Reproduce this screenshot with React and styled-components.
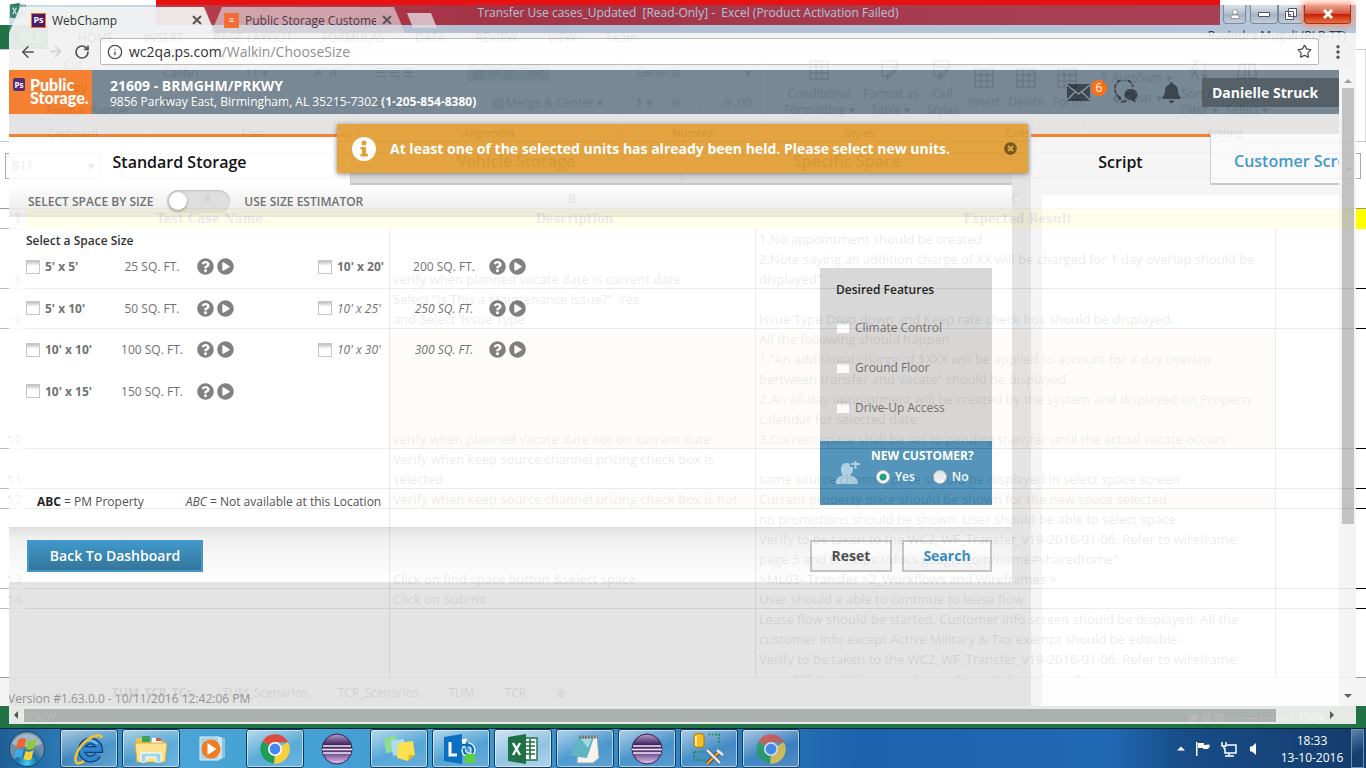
import React from "react";
import styled, { createGlobalStyle, css } from "styled-components";
import { ArrowLeft, ArrowRight, RotateCw, Info, Star, EllipsisVertical } from "lucide-react";
import { FaBell, FaQuestionCircle, FaPlayCircle, FaTimesCircle } from "react-icons/fa";

const Global = createGlobalStyle`
  *, *::before, *::after { box-sizing: border-box; }
  body { margin: 0; background: #fff; overflow: hidden; font-family: "Open Sans", "Noto Sans", sans-serif; }
  button, input { font-family: inherit; }
  button { padding: 0; border: 0; background: none; }
  svg { display: block; }
`;

/* ---------- desktop ---------- */
const Desktop = styled.div`
  display: flex;
  flex-direction: column;
  height: 100vh;
  min-width: 1100px;
  overflow: hidden;
`;
const Stage = styled.div`
  position: relative;
  flex: 1;
  min-height: 0;
  display: flex;
  flex-direction: column;
`;

/* ---------- spreadsheet window ---------- */
const Excel = styled.section`
  flex: 1;
  min-height: 0;
  display: flex;
  flex-direction: column;
  background: #fff;
  color: #000;
  font-family: "Open Sans", sans-serif;
  font-size: 12px;
`;
const ExcelTitle = styled.div`
  display: grid;
  grid-template-columns: 156px 1fr 146px;
  height: 25px;
  flex: none;
`;
const TitleLeft = styled.div`
  padding: 3px 10px;
`;
const TitleText = styled.div`
  background: #e81010;
  color: #fff;
  text-align: center;
  line-height: 25px;
  font-size: 12px;
  font-family: "Open Sans", sans-serif;
  white-space: pre;
`;
const RibbonTabs = styled.div`
  display: flex;
  height: 25px;
  flex: none;
  gap: 30px;
  padding-right: 20px;
  font-size: 12px;
  line-height: 26px;
  white-space: nowrap;
  border-bottom: 1px solid #c8c8c8;
`;
const FileTab = styled.span`
  width: 48px;
  padding-left: 20px;
  background: #217346;
  color: #fff;
`;
const Account = styled.span`
  margin-left: auto;
  line-height: 22px;
`;
const Ribbon = styled.div`
  display: grid;
  grid-template-columns: 147px 212px 261px 148px 184px 133px 1fr;
  height: 92px;
  flex: none;
  border-bottom: 1px solid #c8c8c8;
  color: #333;
`;
const Group = styled.div`
  display: flex;
  flex-direction: column;
  border-right: 1px solid #ddd;
  white-space: nowrap;
`;
const GroupBody = styled.div`
  flex: 1;
  display: flex;
  flex-direction: column;
  justify-content: space-evenly;
  padding: 0 16px;
`;
const GroupLine = styled.div`
  display: flex;
  justify-content: ${(p) => p.$justify || "space-between"};
  align-items: center;
  gap: 8px;
`;
const GroupName = styled.div`
  text-align: center;
  font-size: 11px;
  line-height: 16px;
`;
const BigTool = styled.div`
  display: flex;
  flex-direction: column;
  align-items: center;
  gap: 4px;
  line-height: 16px;
  text-align: center;
`;
const Shade = styled.span`
  background: #9fc9b4;
  padding: 0 6px;
`;
const FormulaBar = styled.div`
  height: 48px;
  flex: none;
  display: flex;
  justify-content: space-between;
  align-items: flex-start;
  padding: 11px 5px 0 5px;
`;
const NameBox = styled.div`
  width: ${(p) => p.$w};
  height: 26px;
  padding: 0 6px;
  border: 1px solid #aaa;
  line-height: 24px;
  display: flex;
  justify-content: space-between;
`;
const ColumnHeads = styled.div`
  display: grid;
  grid-template-columns: 363px 366px 520px;
  height: 19px;
  flex: none;
  padding-left: 26px;
  line-height: 18px;
  text-align: center;
  border-bottom: 1px solid #999;
`;
const SheetClip = styled.div`
  flex: 1;
  min-height: 0;
  overflow: hidden;
  border-bottom: 1px solid #999;
`;
const Sheet = styled.table`
  width: 100%;
  table-layout: fixed;
  border-collapse: separate;
  border-spacing: 0;
  font-size: 13px;
  line-height: 20px;
  td, th { padding: 0 0 0 3px; vertical-align: bottom; white-space: pre; overflow: hidden; height: 20px;
    box-shadow: inset -1px -1px 0 #000; }
  td:last-child { box-shadow: inset 0 -1px 0 #000; }
  td:first-child { box-shadow: inset 0 -1px 0 #bbb; text-align: right; padding-right: 4px; color: #555; }
  thead td, thead th { font-family: "DejaVu Serif", serif; font-weight: bold; font-size: 12px; }
  thead th, thead td:last-child { box-shadow: none; background: #ff0; }
`;
const SheetRow = styled.tr`
  height: ${(p) => p.$lines * 20}px;
  ${(p) => p.$tint && css`td:nth-child(3), td:nth-child(4) { background: #fbe5d6; }`}
`;
const SheetTabs = styled.div`
  display: flex;
  align-items: center;
  gap: 30px;
  height: 28px;
  flex: none;
  padding-left: 112px;
  background: #f4f4f4;
`;
const StatusBar = styled.div`
  height: 22px;
  flex: none;
  background: #217346;
  color: #fff;
  display: flex;
  justify-content: space-between;
  padding: 0 40px 0 22px;
  line-height: 22px;
  font-size: 11px;
`;

const rows = [
  [8, 3, "", "verify when planned vacate date is current date", "1.No appointment should be created\n2.Note saying an addition charge of XX will be charged for 1 day overlap should be\ndisplayed”"],
  [9, 2, "", "Select “Is This a Maintenance issue?”  Yes\nand Select ‘Issue Type", "Issue Type Drop down and Keep rate check box should be displayed."],
  [10, 6, "", "verify when planned vacate date not on current date", "All the following should happen\n1.”An additional charge of $XXX will be applied to account for X day overlap\nbertween transfer and vacate” should be displayed.\n2.An all-day appointment will be created by the system and displayed on Property\ncalendar for selected date\n3.Current space shall be set to pending transfer until the actual vacate occurs", true],
  [11, 2, "", "Verify when keep source channel pricing check box is\nselected", "same source channel price should be displayed in select space screen"],
  [12, 1, "", "Verify when keep source channel pricing check box is not", "Current property price should be shown for the new space selected", true],
  [13, 4, "", "Click on find space button &select space", "no promotions should be shown. User should be able to select space\nVerify to be taken to the WC2_WF_Transfer_v19-2016-01-06. Refer to wireframe\npage 5 and 6 \"https://docs.google.com/home#sharedtome\"\n>ML03- Transfer >2_Workflows and Wireframes >"],
  [14, 1, "", "Click on Submit", "User should e able to continue to lease flow"],
  ["", 4, "", "", "Lease flow should be started. Customer info screen should be displayed. All the\ncustomer info except Active Military & Tax exempt should be editable.\nVerify to be taken to the WC2_WF_Transfer_v19-2016-01-06. Refer to wireframe\npage 9 \"https://docs.google.com/home#sharedtome\""],
];

const ExcelMark = ({ size = 30 }) => (
  <svg width={size} height={size} viewBox="0 0 30 30" aria-hidden="true">
    <path d="M16 4h13v22H16z" fill="#fff" stroke="#1e7145" strokeWidth="1.4" />
    <path d="M18 8h9M18 12h9M18 16h9M18 20h9M22 5v20" stroke="#1e7145" strokeWidth="1.6" />
    <path d="M0 3 18 0v30L0 27z" fill="#1e7145" />
    <path d="m5 9 7 12M12 9 5 21" stroke="#fff" strokeWidth="2.4" />
  </svg>
);

const Sketch = ({ d, size = 24 }) => (
  <svg width={size} height={size} viewBox="0 0 24 24" fill="none" stroke="#333" strokeWidth="1.5" aria-hidden="true">
    <path d={d} />
  </svg>
);
const grid = "M3 3h18v18H3zM3 9h18M3 15h18M9 3v18M15 3v18";
const brush = "M3 3h15v6H3zM3 9v9h8M20 8l-8 10-4 3 1-5z";

function ExcelWindow() {
  return (
    <Excel aria-label="Excel">
      <ExcelTitle>
        <TitleLeft><ExcelMark size={16} /></TitleLeft>
        <TitleText>{"Transfer Use cases_Updated  [Read-Only] -  Excel (Product Activation Failed)"}</TitleText>
        <span />
      </ExcelTitle>
      <RibbonTabs>
        <FileTab>FILE</FileTab><span>HOME</span><span>INSERT</span><span>PAGE LAYOUT</span><span>FORMULAS</span>
        <span>DATA</span><span>REVIEW</span><span>VIEW</span><span>Team</span>
        <Account>Ravindra Mugali (RLR-TT)</Account>
      </RibbonTabs>
      <Ribbon>
        <Group>
          <GroupBody>
            <GroupLine $justify="center">Cut</GroupLine><GroupLine $justify="center">Copy</GroupLine>
            <GroupLine $justify="flex-end">Format Painter</GroupLine>
          </GroupBody>
          <GroupName>Clipboard</GroupName>
        </Group>
        <Group>
          <GroupBody>
            <GroupLine><span>Calibri</span><span>11 ▾</span><span>Aˆ Aˇ</span></GroupLine>
            <GroupLine><b>B</b><i>I</i><u>U</u><span>▾</span><span>A ▾</span></GroupLine>
          </GroupBody>
          <GroupName>Font</GroupName>
        </Group>
        <Group>
          <GroupBody>
            <GroupLine><span>☰ ☰ ☰</span><Shade>▤ Wrap Text</Shade><span /></GroupLine>
            <GroupLine><span>☰ ☰ ☰</span><span>▤ Merge &amp; Center ▾</span></GroupLine>
          </GroupBody>
          <GroupName>Alignment</GroupName>
        </Group>
        <Group>
          <GroupBody>
            <GroupLine><span>General</span><span>▾</span></GroupLine>
            <GroupLine><span>$ ▾</span><span>%</span><span>,</span><span>.0 .00</span></GroupLine>
          </GroupBody>
          <GroupName>Number</GroupName>
        </Group>
        <Group>
          <GroupBody>
            <GroupLine>
              <BigTool><Sketch d={grid} />Conditional<br />Formatting ▾</BigTool>
              <BigTool><Sketch d={brush} />Format as<br />Table ▾</BigTool>
              <BigTool><Sketch d={brush} />Cell<br />Styles</BigTool>
            </GroupLine>
          </GroupBody>
          <GroupName>Styles</GroupName>
        </Group>
        <Group>
          <GroupBody>
            <GroupLine>
              <BigTool><Sketch d={grid} />Insert</BigTool>
              <BigTool><Sketch d={grid} />Delete</BigTool>
              <BigTool><Sketch d={grid} />Form</BigTool>
            </GroupLine>
          </GroupBody>
          <GroupName>Cells</GroupName>
        </Group>
        <Group>
          <GroupBody>
            <GroupLine $justify="flex-start">
              <BigTool><span>∑ AutoSum ▾</span><span>◆ Clear ▾</span></BigTool>
              <BigTool><Sketch d="M4 3h7l-7 8h7M4 21l4-8 3 8M18 4v16l-3-4m3 4 3-4" />Sort &amp;<br />Filter ▾</BigTool>
              <BigTool><Sketch d="M5 6h5v14H3v-7zM19 6h-5v14h7v-7z" />Find &amp;<br />Select ▾</BigTool>
            </GroupLine>
          </GroupBody>
          <GroupName>Editing</GroupName>
        </Group>
      </Ribbon>
      <FormulaBar>
        <NameBox $w="96px"><span>B11</span><span>▾</span></NameBox>
        <NameBox $w="1240px"><span /><span>⌄</span></NameBox>
      </FormulaBar>
      <ColumnHeads><span>A</span><span>B</span><span>C</span></ColumnHeads>
      <SheetClip>
        <Sheet>
          <colgroup>
            <col style={{ width: 26 }} /><col style={{ width: 364 }} /><col style={{ width: 366 }} /><col style={{ width: 520 }} /><col />
          </colgroup>
          <thead>
            <tr><td>1</td><th scope="col">Test Case Name</th><th scope="col">Description</th><th scope="col">Expected Result</th><td /></tr>
          </thead>
          <tbody>
            {rows.map(([n, lines, a, b, c, tint], i) => (
              <SheetRow key={i} $lines={lines} $tint={tint}>
                <td>{n}</td><td>{a}</td><td>{b}</td><td>{c}</td><td />
              </SheetRow>
            ))}
          </tbody>
        </Sheet>
      </SheetClip>
      <SheetTabs>
        <b>TUM_TCR_TCs</b><span>TUM_Scenarios</span><span>TCR_Scenarios</span><span>TUM</span><span>TCR</span><span>⊕</span>
      </SheetTabs>
      <StatusBar><span>READY</span><span>▦ ▤ ▥ − ——|—— + 100%</span></StatusBar>
    </Excel>
  );
}

/* ---------- browser window ---------- */
const Browser = styled.section`
  position: absolute;
  top: 5px;
  left: 9px;
  right: 10px;
  bottom: 4px;
  display: flex;
  flex-direction: column;
`;
const TabStrip = styled.div`
  display: flex;
  height: 28px;
  flex: none;
  background: linear-gradient(90deg, rgba(110, 165, 185, 0.35), rgba(70, 100, 145, 0.42) 35%, rgba(90, 130, 175, 0.45));
`;
const Tab = styled.div`
  display: flex;
  align-items: center;
  gap: 6px;
  width: ${(p) => p.$w}px;
  margin: 2px -6px 0 ${(p) => (p.$active ? 0 : 2)}px;
  padding: 0 13px 0 ${(p) => (p.$active ? 22 : 13)}px;
  font-size: 12px;
  color: ${(p) => (p.$active ? "#333" : "#4a3a42")};
  background: ${(p) => (p.$active ? "rgba(242,242,242,.93)" : "rgba(222,214,220,.68)")};
  clip-path: polygon(11px 0, calc(100% - 11px) 0, 100% 100%, 0 100%);
`;
const TabLabel = styled.span`
  flex: 1;
  overflow: hidden;
  white-space: nowrap;
`;
const CloseX = styled.button`
  width: 10px;
  height: 10px;
  color: #555;
`;
const NewTab = styled.button`
  width: 30px;
  height: 15px;
  margin: 8px 0 0 8px;
  background: rgba(225, 218, 224, 0.8);
  clip-path: polygon(0 0, 24px 0, 100% 100%, 6px 100%);
`;
const WinButtons = styled.div`
  display: flex;
  align-items: flex-start;
  margin: 0 5px 0 auto;
`;
const WinButton = styled.button`
  display: flex;
  align-items: center;
  justify-content: center;
  width: ${(p) => p.$w}px;
  height: 19px;
  margin-right: ${(p) => (p.$gap ? 4 : 0)}px;
  border: 1px solid #7d8a99;
  border-top: 0;
  border-radius: 0 0 4px 4px;
  background: linear-gradient(#dde3ea, #b3bfcc 50%, #a3b1c0 51%, #c4ced9);
  ${(p) => p.$close && css`
    border-color: #8c3a2e;
    background: linear-gradient(#e9a392, #d8553c 48%, #c01d05 50%, #f0703a);
    box-shadow: 0 0 6px 2px #ff8a6a;
  `}
`;
const Toolbar = styled.div`
  display: flex;
  align-items: center;
  height: 37px;
  flex: none;
  gap: 10px;
  padding: 0 9px 0 10px;
  background: #f2f2f2;
  opacity: 0.93;
  color: #444;
`;
const IconButton = styled.button`
  flex: none;
  color: ${(p) => (p.$off ? "#ccc" : "#444")};
`;
const Omnibox = styled.div`
  display: flex;
  align-items: center;
  flex: 1;
  height: 27px;
  padding: 0 6px;
  gap: 6px;
  background: #fff;
  border: 1px solid #b5b5b5;
  border-radius: 2px;
  font-size: 14px;
`;
const Url = styled.span`
  flex: 1;
  color: #888;
  b { font-weight: 400; color: #222; }
`;
const View = styled.div`
  display: flex;
  flex: 1;
  min-height: 0;
  opacity: 0.92;
`;
const Page = styled.div`
  position: relative;
  flex: 1;
  min-width: 0;
  display: flex;
  flex-direction: column;
  overflow: hidden;
  background: #e2e2e2;
`;
const VScroll = styled.div`
  display: flex;
  flex-direction: column;
  align-items: center;
  width: 17px;
  flex: none;
  padding: 7px 0 6px;
  background: #f4f4f4;
`;
const VThumb = styled.div`
  width: 12px;
  height: 70%;
  margin: 3px 0 auto;
  background: #bdbdbd;
`;
const HScroll = styled.div`
  display: flex;
  align-items: center;
  height: 18px;
  flex: none;
  padding: 0 20px 0 3px;
  background: #f4f4f4;
  opacity: 0.93;
`;
const HThumb = styled.div`
  height: 13px;
  flex: 1;
  margin: 0 52px 0 4px;
  background: #b6b6b6;
`;
const Arrow = ({ d, c = "#555" }) => (
  <svg width="8" height="8" viewBox="0 0 8 8" aria-hidden="true"><path d={d} fill={c} /></svg>
);

/* ---------- web page ---------- */
const Header = styled.header`
  display: flex;
  align-items: stretch;
  height: 44px;
  flex: none;
  background: #6d7e8c;
  color: #fff;
`;
const Logo = styled.a`
  display: flex;
  gap: 5px;
  width: 83px;
  padding: 8px 0 0 4px;
  margin-right: 18px;
  background: #f47721;
  color: #fff;
  text-decoration: none;
  font: 900 16px/13px Lato, sans-serif;
`;
const Badge = styled.span`
  display: grid;
  place-content: center;
  width: 12px;
  height: 13px;
  flex: none;
  border-radius: 2px;
  background: #4b1b6d;
  color: #fff;
  font: 700 8px/10px "Open Sans", sans-serif;
`;
const Favicon = styled.span`
  display: grid;
  place-content: center;
  width: 15px;
  height: 15px;
  flex: none;
  border: 1px solid #f47721;
  background: ${(p) => (p.$plain ? "#f26a35" : "#4b1b6d")};
  color: #fff;
  font: 700 9px/12px "Open Sans", sans-serif;
`;
const Location = styled.div`
  flex: 1;
  padding-top: 8px;
  font-size: 12px;
  line-height: 15px;
  strong { display: block; font-size: 14px; line-height: 16px; }
`;
const HeaderTools = styled.div`
  display: flex;
  align-items: center;
  color: #36424c;
`;
const Tool = styled.button`
  display: flex;
  color: #2c3740;
  margin-right: ${(p) => p.$gap}px;
`;
const Count = styled.span`
  width: 16px;
  height: 16px;
  margin: 0 7px 8px 1px;
  border-radius: 50%;
  background: #f60;
  color: #fff;
  font-size: 12px;
  line-height: 16px;
  text-align: center;
`;
const UserButton = styled.button`
  width: 137px;
  height: 29px;
  padding-left: 10px;
  background: #47535c;
  color: #fff;
  font-size: 14px;
  font-weight: 700;
  text-align: left;
`;
const Body = styled.div`
  display: flex;
  flex: 1;
  min-height: 0;
  padding-top: 20px;
`;
const Main = styled.main`
  display: flex;
  flex-direction: column;
  flex: 1;
  min-width: 0;
  margin-right: 19px;
`;
const Tabs = styled.div`
  display: flex;
  height: 51px;
  flex: none;
`;
const PageTab = styled.button`
  width: ${(p) => p.$w};
  flex: none;
  padding-top: 2px;
  font-size: 16px;
  font-weight: 600;
  white-space: nowrap;
  color: ${(p) => p.$color || "#000"};
  background: ${(p) => p.$bg || "#fff"};
  border-top: 3px solid #f47721;
  ${(p) => !p.$active && css`
    border-top: 0;
    border-left: 1px solid #ccc;
    border-bottom: 2px solid #c4c4c4;
    padding-top: 5px;
  `}
`;
const ModeBar = styled.div`
  display: flex;
  align-items: center;
  gap: 14px;
  height: 32px;
  flex: none;
  padding-left: 19px;
  background: linear-gradient(#fff, #e6e6e6);
  color: #666;
  font-size: 12px;
  font-weight: 600;
`;
const Toggle = styled.input`
  appearance: none;
  width: 63px;
  height: 23px;
  margin: 0;
  border-radius: 12px;
  background: #dcdcdc;
  box-shadow: inset 0 1px 2px #bbb;
  &::before {
    content: "";
    display: block;
    width: 18px;
    height: 18px;
    margin: 2px;
    border-radius: 50%;
    background: #fff;
    box-shadow: 0 1px 3px #888;
  }
`;
const Panel = styled.div`
  display: flex;
  justify-content: space-between;
  height: 311px;
  flex: none;
  padding: 15px 20px 0 17px;
  background: #fff;
  border-bottom: 1px solid #d8d8d8;
`;
const Sizes = styled.fieldset`
  margin: 0;
  padding: 0;
  border: 0;
  display: flex;
  flex-direction: column;
  legend { padding: 0; font-size: 12px; line-height: 18px; font-weight: 600; color: #222; }
`;
const SizeGrid = styled.div`
  display: grid;
  grid-auto-flow: column;
  grid-template-rows: repeat(4, 1fr);
  grid-auto-columns: 292px;
  height: 166px;
  margin-top: -4px;
`;
const SizeItem = styled.div`
  display: grid;
  grid-template-columns: 84px 84px 1fr;
  align-items: center;
  color: #666;
  font-size: 12px;
  font-style: ${(p) => (p.$off ? "italic" : "normal")};
`;
const CheckLabel = styled.label`
  display: flex;
  align-items: center;
  gap: 5px;
  font-weight: ${(p) => (p.$strong ? 700 : 400)};
  white-space: nowrap;
`;
const Check = styled.input`
  appearance: none;
  width: 14px;
  height: 14px;
  margin: 0;
  flex: none;
  border: 1px solid ${(p) => (p.$pale ? "#d6d6d6" : "#c2c2c2")};
  background: linear-gradient(#bbb, #fff 40%);
`;
const Area = styled.span`
  text-align: center;
  white-space: nowrap;
`;
const Helps = styled.span`
  display: flex;
  gap: 3px;
  padding-left: 3px;
  button { color: #777; }
`;
const Legend = styled.div`
  display: flex;
  gap: 42px;
  margin: auto 0 17px 11px;
  font-size: 12px;
  line-height: 16px;
  color: #444;
  b { color: #111; }
`;
const Side = styled.aside`
  width: 172px;
  margin: 36px 0 22px;
  display: flex;
  flex-direction: column;
`;
const Features = styled.fieldset`
  flex: 1;
  margin: 0;
  padding: 14px 16px 0;
  border: 0;
  background: #d5d5d5;
  color: #666;
  font-size: 12px;
  h2 { margin: 0 0 9px; font-size: 12px; line-height: 16px; font-weight: 600; color: #111; }
  label { height: 40px; }
`;
const Customer = styled.div`
  display: grid;
  grid-template-columns: 24px 1fr;
  gap: 11px;
  height: 64px;
  padding: 7px 14px 0 16px;
  background: #478db6;
  color: #fff;
  font-size: 12px;
  svg { margin-top: 13px; }
`;
const Question = styled.fieldset`
  border: 0;
  margin: 0;
  padding: 0;
  legend { padding: 0; line-height: 16px; font-weight: 700; white-space: nowrap; }
`;
const Choices = styled.div`
  display: flex;
  gap: 18px;
  padding: 4px 0 0 5px;
  label { display: flex; align-items: center; gap: 5px; font-weight: 600; line-height: 18px; }
`;
const Radio = styled.input`
  appearance: none;
  width: 14px;
  height: 14px;
  margin: 0;
  border-radius: 50%;
  border: 1px solid #bbb;
  background: linear-gradient(#ddd, #fff);
  &:checked { background: radial-gradient(#1c9c80 0 3px, #fff 4px); }
`;
const Actions = styled.div`
  display: flex;
  align-items: center;
  gap: 10px;
  height: 54px;
  flex: none;
  padding: 1px 20px 0 18px;
  background: linear-gradient(#e0e0e0, #f0f0f0 20%, #fff);
`;
const Action = styled.button`
  width: ${(p) => p.$w}px;
  height: 32px;
  border: 2px solid ${(p) => (p.$primary ? "#3391c5" : "#c0c0c0")};
  background: ${(p) => (p.$primary ? "linear-gradient(#2f8fc4, #246b94)" : "linear-gradient(#fff, #f2f2f2)")};
  color: ${(p) => p.$color};
  font-size: 14px;
  font-weight: ${(p) => (p.$primary ? 600 : 700)};
  white-space: nowrap;
  margin-right: ${(p) => (p.$primary ? "auto" : 0)};
`;
const Version = styled.p`
  margin: auto 0 0 -1px;
  color: #8c8c8c;
  font-size: 12px;
  line-height: 15px;
`;
const Script = styled.aside`
  display: flex;
  flex-direction: column;
  width: 308px;
  flex: none;
  overflow: hidden;
  background: #f5f5f5;
`;
const ScriptBody = styled.div`
  flex: 1;
  margin: 10px 0 0 11px;
  background: #fff;
`;
const Banner = styled.div`
  position: absolute;
  top: 54px;
  left: 328px;
  right: 311px;
  display: flex;
  align-items: center;
  gap: 14px;
  height: 49px;
  padding: 0 11px 0 15px;
  background: rgba(224, 151, 34, 0.93);
  color: #fff;
  font-size: 14px;
  font-weight: 700;
  box-shadow: 0 1px 5px #777;
  span { flex: 1; white-space: nowrap; }
  button { color: #6d4b12; }
`;

const leftSizes = [["5' x 5'", 25], ["5' x 10'", 50], ["10' x 10'", 100], ["10' x 15'", 150]];
const rightSizes = [["10' x 20'", 200], ["10' x 25'", 250, true], ["10' x 30'", 300, true]];

const WhiteX = ({ c = "#555", w = 2 }) => (
  <svg width="10" height="10" viewBox="0 0 10 10" stroke={c} strokeWidth={w} aria-hidden="true"><path d="m1 1 8 8M9 1 1 9" /></svg>
);

function WebPage() {
  return (
    <Page>
      <Header>
        <Logo href="#"><Badge>Ps</Badge><span>Public<br />Storage.</span></Logo>
        <Location>
          <strong>21609 - BRMGHM/PRKWY</strong>
          9856 Parkway East, Birmingham, AL 35215-7302 <b>(1-205-854-8380)</b>
        </Location>
        <HeaderTools>
          <Tool $gap={0} aria-label="Messages">
            <svg width="23" height="17" viewBox="0 0 23 17"><path d="M0 0h23v17H0z" fill="#2c3740" /><path d="m0 1 11.500 9L23 1M0 16l8-8M23 16l-8-8" fill="none" stroke="#8b98a2" strokeWidth="1.200" /></svg>
          </Tool>
          <Count>6</Count>
          <Tool $gap={23} aria-label="Chat">
            <svg width="24" height="24" viewBox="0 0 24 24" fill="none">
              <path d="M7 18C3 16 1 13 1 10a9 9 0 0 1 18-3" stroke="#2c3740" strokeWidth="1.600" strokeDasharray="5 1" />
              <path d="M6 17v3M7 22l5-1" stroke="#2c3740" strokeWidth="1.800" />
              <path d="M17 9c4 0 6.500 2.500 6.500 5.500 0 2-1 3.500-2.500 4.500l.5 4-4-3c-4 0-7-2-7-5.500S13 9 17 9z" fill="#2c3740" />
            </svg>
          </Tool>
          <Tool $gap={20} aria-label="Alerts"><FaBell size={21} /></Tool>
          <UserButton>Danielle Struck</UserButton>
        </HeaderTools>
      </Header>
      <Body>
        <Main>
          <Tabs>
            <PageTab $w="34%" $active>Standard Storage</PageTab>
            <PageTab $w="33%" $bg="#d8d8d8" $color="#444">Vehicle Storage</PageTab>
            <PageTab $w="33%" $bg="#d8d8d8" $color="#444">Specific Space</PageTab>
          </Tabs>
          <ModeBar>
            <span>SELECT SPACE BY SIZE</span>
            <Toggle type="checkbox" role="switch" aria-label="Use size estimator" />
            <span>USE SIZE ESTIMATOR</span>
          </ModeBar>
          <Panel>
            <Sizes>
              <legend>Select a Space Size</legend>
              <SizeGrid>
                {[...leftSizes, ...rightSizes].map(([name, ft, off]) => (
                  <SizeItem key={name} $off={off}>
                    <CheckLabel $strong={!off}><Check type="checkbox" />{name}</CheckLabel>
                    <Area>{ft} SQ. FT.</Area>
                    <Helps>
                      <button aria-label="Help"><FaQuestionCircle size={17} /></button>
                      <button aria-label="Play"><FaPlayCircle size={17} /></button>
                    </Helps>
                  </SizeItem>
                ))}
              </SizeGrid>
              <Legend>
                <span><b>ABC</b> = PM Property</span>
                <span><i>ABC</i> = Not available at this Location</span>
              </Legend>
            </Sizes>
            <Side>
              <Features>
                <h2>Desired Features</h2>
                {["Climate Control", "Ground Floor", "Drive-Up Access"].map((t) => (
                  <CheckLabel key={t}><Check type="checkbox" $pale />{t}</CheckLabel>
                ))}
              </Features>
              <Customer>
                <svg width="24" height="24" viewBox="0 0 24 24" fill="#a9cce0" aria-hidden="true">
                  <path d="M5 8c0-4 2.500-6 6-6 1.500 0 2.500.5 3 1v3h3c.5 4-1 7-3 8.500 5 1 8 3 8 8.500H0c0-5.500 2-7.500 7-8.500C5.500 13 5 11 5 8z" /><path d="M18.500-2h2v4H24v2h-3.500v4h-2V4H15V2h3.500z" />
                </svg>
                <Question>
                  <legend>NEW CUSTOMER?</legend>
                  <Choices>
                    <label><Radio type="radio" name="new" defaultChecked />Yes</label>
                    <label><Radio type="radio" name="new" />No</label>
                  </Choices>
                </Question>
              </Customer>
            </Side>
          </Panel>
          <Actions>
            <Action $w={176} $primary $color="#fff">Back To Dashboard</Action>
            <Action $w={82} $color="#444">Reset</Action>
            <Action $w={90} $color="#2a87bd">Search</Action>
          </Actions>
          <Version>Version #1.63.0.0 - 10/11/2016 12:42:06 PM</Version>
        </Main>
        <Script>
          <Tabs>
            <PageTab $w="179px" $active $bg="#f5f5f5">Script</PageTab>
            <PageTab $w="179px" $bg="#fafafa" $color="#3390c4">Customer Screen</PageTab>
          </Tabs>
          <ScriptBody />
        </Script>
      </Body>
      <Banner role="alert">
        <svg width="24" height="24" viewBox="0 0 24 24" aria-hidden="true">
          <circle cx="12" cy="12" r="12" fill="#fff" />
          <circle cx="12" cy="6" r="2.500" fill="#e29a22" /><path d="M8.500 10h5.500v7h2v2.500H8.500V17H10v-4.500H8.500z" fill="#e29a22" />
        </svg>
        <span>At least one of the selected units has already been held. Please select new units.</span>
        <button aria-label="Dismiss"><FaTimesCircle size={13} /></button>
      </Banner>
    </Page>
  );
}

function BrowserWindow() {
  return (
    <Browser aria-label="Browser">
      <TabStrip>
        <Tab $w={206} $active><Favicon>Ps</Favicon><TabLabel>WebChamp</TabLabel><CloseX aria-label="Close tab"><WhiteX /></CloseX></Tab>
        <Tab $w={194}><Favicon $plain>≡</Favicon><TabLabel>Public Storage Customer</TabLabel><CloseX aria-label="Close tab"><WhiteX /></CloseX></Tab>
        <NewTab aria-label="New tab" />
        <WinButtons>
          <WinButton $w={23} $gap aria-label="Profile">
            <svg width="10" height="10" viewBox="0 0 10 10" fill="#fff" stroke="#667" strokeWidth=".6"><circle cx="5" cy="3" r="2.400" /><path d="M1 9.500V7l2-1h4l2 1v2.500z" /></svg>
          </WinButton>
          <WinButton $w={28} aria-label="Minimize"><svg width="12" height="5"><path d="M.5.5h11v4H.5z" fill="#fff" stroke="#556" /></svg></WinButton>
          <WinButton $w={26} aria-label="Restore">
            <svg width="12" height="12" fill="#fff" stroke="#556"><path d="M3.500.5h8v8h-8zM.5 3.500h8v8h-8zM3.500 6.500h2v2h-2z" /></svg>
          </WinButton>
          <WinButton $w={47} $close aria-label="Close"><WhiteX c="#fff" w={3} /></WinButton>
        </WinButtons>
      </TabStrip>
      <Toolbar>
        <IconButton aria-label="Back"><ArrowLeft size={18} /></IconButton>
        <IconButton $off aria-label="Forward"><ArrowRight size={17} /></IconButton>
        <IconButton aria-label="Reload"><RotateCw size={16} strokeWidth={2.5} /></IconButton>
        <Omnibox><Info size={16} /><Url><b>wc2qa.ps.com</b>/Walkin/ChooseSize</Url><Star size={15} /></Omnibox>
        <IconButton aria-label="Menu"><EllipsisVertical size={18} strokeWidth={2.5} /></IconButton>
      </Toolbar>
      <View>
        <WebPage />
        <VScroll><Arrow d="M0 6h8L4 2z" c="#999" /><VThumb /><Arrow d="M0 2h8L4 6z" /></VScroll>
      </View>
      <HScroll><Arrow d="M6 0v8L2 4z" /><HThumb /><Arrow d="M2 0v8l4-4z" /></HScroll>
    </Browser>
  );
}

/* ---------- taskbar ---------- */
const Taskbar = styled.nav`
  display: flex;
  align-items: stretch;
  height: 40px;
  flex: none;
  border-top: 1px solid #0c2438;
  background: linear-gradient(90deg, #1f5f98 0, #2a78b4 60px, #4aa5d6 180px, #419bd2 450px, #2f7fc0 720px, #1c62ac 860px, #2069b3 1110px, #184d88 1180px, #143c6c);
`;
const Start = styled.button`
  width: 60px;
  display: grid;
  place-items: center;
  padding-right: 6px;
`;
const Items = styled.div`
  display: flex;
  gap: 4px;
`;
const Item = styled.button`
  display: grid;
  place-items: center;
  width: 58px;
  border-radius: 3px;
  ${(p) => p.$on && css`
    border: 1px solid #123c5c;
    box-shadow: inset 0 0 0 1px rgba(255, 255, 255, 0.55);
    background: linear-gradient(160deg, rgba(255, 255, 255, ${p.$hot ? 0.75 : 0.6}), rgba(255, 255, 255, ${p.$hot ? 0.45 : 0.1}) 55%, rgba(255, 255, 255, ${p.$hot ? 0.6 : 0.2}));
  `}
`;
const Tray = styled.div`
  display: flex;
  align-items: center;
  gap: 10px;
  margin-left: auto;
  padding-right: 2px;
  color: #fff;
`;
const Clock = styled.time`
  width: 76px;
  padding-left: 6px;
  font-size: 12px;
  line-height: 17px;
  text-align: center;
`;
const ShowDesktop = styled.button`
  width: 13px;
  margin-left: -6px;
  align-self: stretch;
  border: 1px solid #6f93b5;
  background: linear-gradient(160deg, #5b82a8, #173f6c 60%);
`;

const ChromeMark = ({ dim }) => (
  <svg width="30" height="30" viewBox="0 0 30 30" opacity={dim ? 0.75 : 1}>
    <path d="M15 15 2.400 7.500A14.600 14.600 0 0 1 28 8.200H15z" fill="#dd4b3e" />
    <path d="M15 15 28 8.200A14.600 14.600 0 0 1 14 29.600z" fill="#f8cf3c" />
    <path d="M15 15 14 29.600A14.600 14.600 0 0 1 2.400 7.500z" fill="#1f9e58" />
    <circle cx="15" cy="15" r="7" fill="#fff" /><circle cx="15" cy="15" r="5.400" fill="#4688f1" />
  </svg>
);
const EclipseMark = () => (
  <svg width="32" height="32" viewBox="0 0 32 32">
    <defs><linearGradient id="ecl" x2="0" y2="1"><stop stopColor="#b9a0cc" /><stop offset=".35" stopColor="#44265f" /><stop offset=".6" stopColor="#5d3b80" /><stop offset="1" stopColor="#e6c8f0" /></linearGradient></defs>
    <circle cx="16" cy="16" r="15" fill="url(#ecl)" stroke="#35204c" />
    <path d="M2 13h28M1 16.500h30M2 20h28" stroke="#f1e8f7" strokeWidth="1.600" />
  </svg>
);
const IeMark = () => (
  <svg width="32" height="32" viewBox="0 0 32 32" fill="none">
    <path d="M25 22a9 9 0 1 1 1.500-5.500H11" stroke="#0f3f78" strokeWidth="7" />
    <path d="M25 22a9 9 0 1 1 1.500-5.500H11" stroke="#2f86cc" strokeWidth="4.500" />
    <path d="M24 11a9 9 0 0 0-13-1" stroke="#8fd0f5" strokeWidth="1.500" />
    <path d="M29 5C27-1 16 4 9 12S1 28 4 30c2 1 4 0 7-2" stroke="#f5c02c" strokeWidth="2.600" />
  </svg>
);
const FolderMark = () => (
  <svg width="34" height="30" viewBox="0 0 34 30">
    <path d="M2 4h10l2 3h16v21H3z" fill="#e8c35a" /><path d="M8 2h8v6H8z" fill="#3aa55a" /><path d="M18 4h9v6h-9z" fill="#fff" /><path d="M22 4h5v3h-5z" fill="#d8563c" />
    <path d="M1 9h32l-2 19H3z" fill="#fbe391" stroke="#d9ab3f" /><path d="M7 28v-9h20v9h-5v-5H12v5z" fill="#9dd6ef" stroke="#fff" />
  </svg>
);
const PlayerMark = () => (
  <svg width="28" height="26" viewBox="0 0 28 26">
    <path d="M8 2h18v20H8z" fill="#8ac3de" /><path d="M5 1h18v22H5z" fill="#c7e2ee" /><path d="M1 1h19v23H1z" fill="#a9d0e4" stroke="#e3f1f8" />
    <circle cx="12" cy="13" r="9.500" fill="#f07d1e" /><path d="m8.500 7 9 6-9 6z" fill="#fff" />
  </svg>
);
const NotesMark = () => (
  <svg width="34" height="28" viewBox="0 0 34 28">
    <path d="m2 3 12-2 3 15-13 2z" fill="#8fdc93" /><path d="m9 6 13-2 2 15-13 2z" fill="#aedcf2" /><path d="m16 8 15-2 2 14-7 6-11-3z" fill="#fbe04f" /><path d="m26 26 1-6h6z" fill="#d8b41f" />
  </svg>
);
const LyncMark = () => (
  <svg width="34" height="32" viewBox="0 0 34 32">
    <path d="M0 4 18 1v30L0 28z" fill="#0b6fc4" /><path d="M6 9v13h7" fill="none" stroke="#fff" strokeWidth="3" />
    <path d="M18 9l5-1M18 12h6a5 5 0 0 1 4 8M29 22h-5a5 5 0 0 1-4-6" fill="none" stroke="#fff" strokeWidth="5" />
    <path d="M18 12h6a5 5 0 0 1 4 8M29 22h-5a5 5 0 0 1-4-6" fill="none" stroke="#0b6fc4" strokeWidth="2.500" /><path d="m22 8 4 4-4 4z" fill="#0b6fc4" /><path d="M21 21h10v9H21z" fill="#5bd13b" />
  </svg>
);
const NotepadMark = () => (
  <svg width="32" height="30" viewBox="0 0 32 30">
    <path d="m10 3 18-1 2 22-6 5H8z" fill="#f4f4ec" stroke="#9aa" /><path d="M10 3h15l-7 21-17-2z" fill="#5fb5c4" /><path d="m12 5 11-1-4 10z" fill="#a4dbe3" />
    <path d="M10 3h19" stroke="#777" strokeWidth="3" strokeDasharray="2 1" />
  </svg>
);
const DbMark = () => (
  <svg width="32" height="32" viewBox="0 0 32 32" fill="none">
    <path d="M15 1.500h11v10M1 19v8h11M1 19h10" stroke="#1c8a3c" strokeWidth="1.500" strokeDasharray="2 1.500" />
    <path d="M1 2c2-2 8-2 10 0v11c-2 2-8 2-10 0z" fill="#f4bd22" stroke="#a3770b" /><path d="M3 3v10" stroke="#ffeaa0" strokeWidth="2" />
    <path d="M27 18 14 31" stroke="#333" strokeWidth="4" /><path d="M27 18 14 31" stroke="#f3a52a" strokeWidth="2.500" />
    <path d="m14 17 13 13" stroke="#555" strokeWidth="4" /><path d="m14 17 13 13M24 17l6 5" stroke="#e8e8e8" strokeWidth="2.500" />
  </svg>
);
const StartMark = () => (
  <svg width="38" height="38" viewBox="0 0 38 38">
    <defs><radialGradient id="orb" cy=".9"><stop stopColor="#3fd0f5" /><stop offset=".6" stopColor="#1b6fa8" /><stop offset="1" stopColor="#6f8fa8" /></radialGradient></defs>
    <circle cx="19" cy="19" r="17.500" fill="url(#orb)" stroke="#16466c" />
    <path d="M4 14a16 16 0 0 1 30 0c-8 4-22 4-30 0z" fill="#fff" opacity=".35" />
    <path d="M10 10c3-2 5-2 8-1l-2 9c-3-1-5-1-8 1z" fill="#f0642a" /><path d="M20 10c3 1 5 1 9-1l-3 9c-3 2-5 2-8 1z" fill="#8fca3a" />
    <path d="M7.500 21c3-2 5-2 8-1l-2 8c-3-1-5-1-8 1z" fill="#3fa9e8" /><path d="M17.500 21c3 1 5 1 8-1l-2 9c-3 2-5 1-8 0z" fill="#fbd02f" />
  </svg>
);

const apps = [
  ["Internet Explorer", <IeMark />, true], ["Explorer", <FolderMark />, true], ["Media Player", <PlayerMark />, false],
  ["Chrome", <ChromeMark />, true], ["Eclipse", <EclipseMark />, false], ["Sticky Notes", <NotesMark />, true],
  ["Lync", <LyncMark />, true], ["Excel", <ExcelMark />, true, true], ["Notepad", <NotepadMark />, true],
  ["Eclipse workspace", <EclipseMark />, true], ["Database tools", <DbMark />, true], ["Chrome profile", <ChromeMark dim />, true],
];

function TaskbarRow() {
  return (
    <Taskbar>
      <Start aria-label="Start"><StartMark /></Start>
      <Items>
        {apps.map(([name, icon, on, hot]) => <Item key={name} aria-label={name} $on={on} $hot={hot}>{icon}</Item>)}
      </Items>
      <Tray>
        <svg width="8" height="5" fill="#fff"><path d="M0 4.500h8L4 .5z" /></svg>
        <svg width="16" height="16" viewBox="0 0 16 16" fill="#fff"><path d="M1 1h1.500v14H1zM3 2h6v2l5-.5L15 5l-2 3H8V7H3z" /></svg>
        <svg width="16" height="16" viewBox="0 0 16 16" fill="none" stroke="#fff" strokeWidth="1.500"><path d="M6 4h9v8H4V7M8 12v3M4 15h9M1 1v4h4V1M3 5v3" /></svg>
        <svg width="14" height="14" viewBox="0 0 14 14" fill="#fff"><path d="M3 4.500h2L9 1v12L5 9.500H3z" /></svg>
        <Clock>18:33<br />13-10-2016</Clock>
        <ShowDesktop aria-label="Show desktop" />
      </Tray>
    </Taskbar>
  );
}

export default function App() {
  return (
    <>
      <Global />
      <Desktop>
        <Stage>
          <ExcelWindow />
          <BrowserWindow />
        </Stage>
        <TaskbarRow />
      </Desktop>
    </>
  );
}
